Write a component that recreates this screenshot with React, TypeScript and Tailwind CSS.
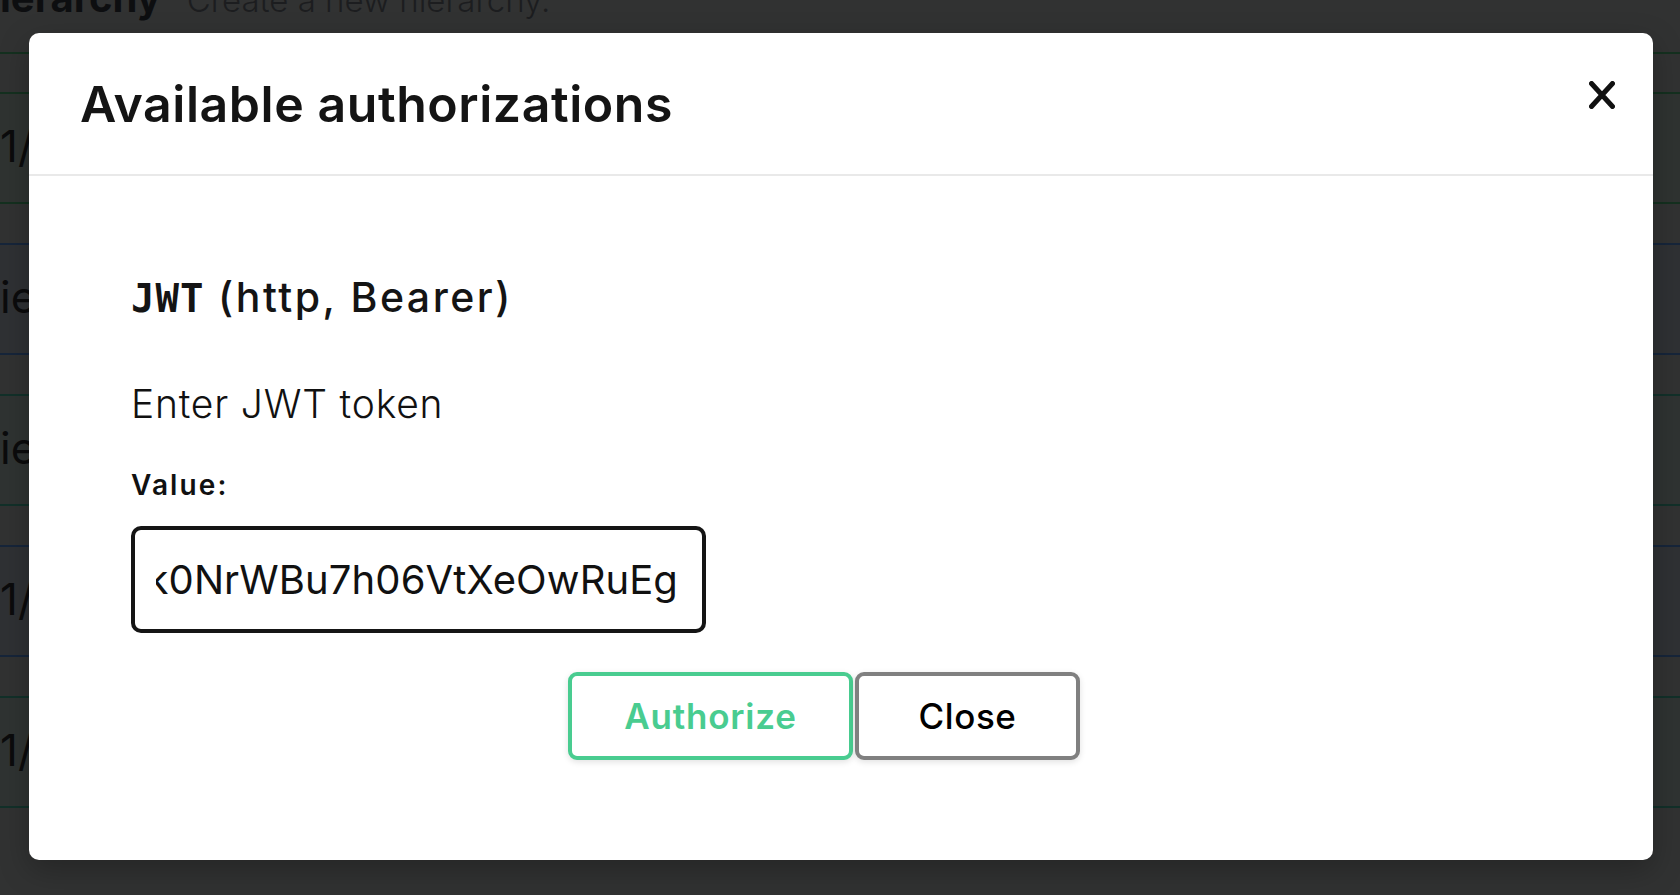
import React from 'react'

const sans = { fontFamily: 'Inter, "Open Sans", sans-serif' }
const mono = { fontFamily: '"DejaVu Sans Mono", "Liberation Mono", monospace' }

const TOKEN =
  'eyJhbGciOiJIUzI1NiIsInR5cCI6IkpXVCJ9.eyJzdWIiOiIxMjM0NTY3ODkwIn0.k0NrWBu7h06VtXeOwRuEg'

interface OpRow {
  label: string
  line: string
  fill: string
}

// rows of the page behind the overlay, already darkened
const rows: OpRow[] = [
  { label: '1/', line: 'border-[#14301f]', fill: 'bg-[#2f3331]' },
  { label: 'ie', line: 'border-[#16253a]', fill: 'bg-[#2f3134]' },
  { label: 'ie', line: 'border-[#123029]', fill: 'bg-[#2f3332]' },
  { label: '1/', line: 'border-[#16253a]', fill: 'bg-[#2f3134]' },
  { label: '1/', line: 'border-[#123029]', fill: 'bg-[#2f3332]' },
]

function BackgroundPage() {
  return (
    <div className="flex flex-col">
      <div className="h-[54px] border-b-2 border-[#14301f] overflow-hidden">
        <div className="-mt-[26px] flex items-baseline gap-[26px] whitespace-nowrap">
          <span className="text-[40px] leading-[48px] font-bold text-[#0d0e10]">ierarchy</span>
          <span className="text-[33px] leading-[40px] font-light text-[#1c1d1f]">Create a new hierarchy.</span>
        </div>
      </div>
      <div className="mt-[38px] flex flex-col gap-[39px]">
        {rows.map((row, i) => (
          <div key={i} className={`h-[112px] border-y-2 ${row.line} ${row.fill} flex items-center`}>
            <span className="-mt-[4px] text-[44px] leading-none text-[#0b0b0c]">{row.label}</span>
          </div>
        ))}
      </div>
    </div>
  )
}

function CloseIcon() {
  return (
    <svg width="26" height="28" viewBox="0 0 26 28" fill="none">
      <path d="M2.5 2.5L23.5 25.5M23.5 2.5L2.5 25.5" stroke="#111" strokeWidth="5" strokeLinecap="round" />
    </svg>
  )
}

function AuthModal() {
  return (
    <div className="absolute left-[29px] top-[33px] w-[1624px] h-[827px] bg-white rounded-[10px] shadow-[0_10px_30px_rgba(0,0,0,0.25)] flex flex-col overflow-hidden">
      {/* header */}
      <div className="h-[143px] shrink-0 border-b-2 border-[#e9e9e9] flex items-center justify-between pl-[51px] pr-[38px]">
        <h3 className="text-[50px] leading-[60px] font-semibold text-[#141414] tracking-[0.55px]">Available authorizations</h3>
        <button className="-mt-[18px] p-0 flex items-center justify-center">
          <CloseIcon />
        </button>
      </div>

      {/* content */}
      <div className="flex-1 pl-[102px] pr-[136px] pt-[97px]">
        <h4 className="text-[41px] leading-[48px] font-medium text-[#141414] tracking-[2.5px] whitespace-nowrap">
          <code className="font-bold tracking-[1px] text-[39px]" style={mono}>JWT</code> (http, Bearer)
        </h4>

        <p className="mt-[57px] text-[39px] leading-[48px] font-light text-[#111] tracking-[0.8px]">Enter JWT token</p>

        <label className="block mt-[40px] text-[28px] leading-[34px] font-semibold text-[#111] tracking-[2.1px]">Value:</label>

        <div className="mt-[24px] w-[575px] h-[107px] border-4 border-[#151515] rounded-[10px] pl-[21px] pr-[24px] flex items-center">
          <div className="w-full overflow-hidden flex justify-end">
            <span className="whitespace-nowrap text-[40px] leading-[50px] text-[#111] tracking-[0.1px]">{TOKEN}</span>
          </div>
        </div>

        <div className="mt-[39px] flex justify-center gap-[2px]">
          <button className="w-[285px] h-[88px] border-4 border-[#49cc90] rounded-[9px] bg-white text-[35px] font-semibold text-[#49cc90] tracking-[0.8px] shadow-[0_2px_6px_rgba(0,0,0,0.12)]">
            Authorize
          </button>
          <button className="w-[225px] h-[88px] border-4 border-[#808080] rounded-[9px] bg-white text-[35px] font-medium text-[#000] tracking-[0.6px] shadow-[0_2px_6px_rgba(0,0,0,0.12)]">
            Close
          </button>
        </div>
      </div>
    </div>
  )
}

export default function App() {
  return (
    <div className="relative w-full h-[895px] overflow-hidden bg-[#313232]" style={sans}>
      <BackgroundPage />
      <AuthModal />
    </div>
  )
}
